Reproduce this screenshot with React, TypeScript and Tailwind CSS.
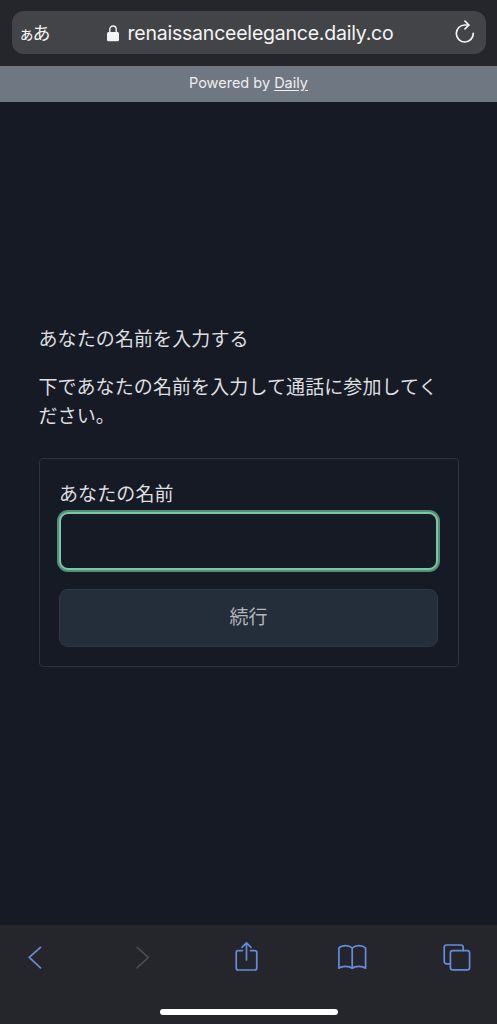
import { useState } from "react";
import type { ReactNode } from "react";

const toolbarItems: { label: string; disabled?: boolean; icon: ReactNode }[] = [
  { label: "戻る", icon: <path d="M21.5 6.3 10.2 16.4 21.5 26.8" /> },
  {
    label: "進む",
    disabled: true,
    icon: <path d="M12.2 6.3 23.3 16.4 12.2 26.8" />,
  },
  {
    label: "共有",
    icon: (
      <>
        <path d="M12.5 9.6H8.2a2 2 0 0 0-2 2V27a2 2 0 0 0 2 2h16.6a2 2 0 0 0 2-2V11.6a2 2 0 0 0-2-2h-4.3" />
        <path d="M16.5 19V2.3M12 6.4l4.5-4.5L21 6.4" />
      </>
    ),
  },
  {
    label: "ブックマーク",
    icon: (
      <path d="M16.2 7C13 3.7 6 3.7 2.9 7V27.2C6 24.8 13 24.8 16.2 27.2C19.4 24.8 26.4 24.8 29.6 27.2V7C26.4 3.7 19.4 3.7 16.2 7ZM16.2 7V27.2" />
    ),
  },
  {
    label: "タブ",
    icon: (
      <>
        <path d="M9.3 22.8H5.6a2.4 2.4 0 0 1-2.4-2.4V6.4A2.4 2.4 0 0 1 5.6 4h14.2a2.4 2.4 0 0 1 2.4 2.4v3" />
        <rect x="9.4" y="9.6" width="19.2" height="19.2" rx="2.4" />
      </>
    ),
  },
];

function AddressBar() {
  return (
    <header className="h-[66px] px-[11.5px] pt-[10.5px] bg-[#25262b]">
      <div className="h-[43.5px] rounded-xl bg-[#434448] text-[#f4f4f5] flex items-center justify-between pl-[7px] pr-[9px]">
        <div className="w-8 flex items-baseline leading-none whitespace-nowrap">
          <span className="text-[16px]">ぁ</span>
          <span className="text-[18px] -ml-[2px]">あ</span>
        </div>
        <div className="flex items-center gap-[9px] pt-0.5 -ml-[5px]">
          <svg width="12" height="17" viewBox="0 0 12 17" fill="none">
            <path
              d="M2.8 8V4.2a3.2 3.2 0 0 1 6.4 0V8"
              stroke="currentColor"
              strokeWidth="1.4"
            />
            <rect y="7" width="12" height="9.3" rx="1.5" fill="currentColor" />
          </svg>
          <span className="font-[Inter,sans-serif] text-[19.5px] tracking-[-0.22px] leading-6 whitespace-nowrap">
            renaissanceelegance.daily.co
          </span>
        </div>
        <svg
          width="22"
          height="24"
          viewBox="0 0 22 24"
          fill="none"
          stroke="currentColor"
          strokeWidth="1.7"
          strokeLinecap="round"
          strokeLinejoin="round"
        >
          <path d="M19.3 13.3a8.5 8.5 0 1 1-8.5-8.3h3.8" />
          <path d="M11 1.2l3.9 3.8-3.9 3.9" />
        </svg>
      </div>
    </header>
  );
}

function JoinForm() {
  const [name, setName] = useState("");

  return (
    <form
      onSubmit={(e) => e.preventDefault()}
      className="mt-[29px] h-[209px] rounded border border-[#2b3240] px-[19.5px] pt-5"
    >
      <label htmlFor="name" className="block h-7 leading-7">
        あなたの名前
      </label>
      <input
        id="name"
        value={name}
        onChange={(e) => setName(e.target.value)}
        className="mt-[5px] block w-full h-[58px] rounded-[9px] border-2 border-[#7cc5a6] bg-[#151a24] px-4 outline-none ring-2 ring-[#528f79]"
      />
      <button
        type="submit"
        className="mt-[19px] block w-full h-[58px] rounded-[9px] border border-[#2e3848] bg-[#242d3a] pb-[3px] text-[#b3b6bc]"
      >
        続行
      </button>
    </form>
  );
}

export default function App() {
  return (
    <div
      lang="ja"
      className="w-full h-screen flex flex-col overflow-hidden bg-[#151a24] font-['Noto_Sans_CJK_JP',sans-serif]"
    >
      <AddressBar />

      <div className="h-9 bg-[#6f7782] text-center font-[Inter,sans-serif] text-[14.5px] leading-[34px] text-[#eeeff1]">
        Powered by <span className="underline underline-offset-2">Daily</span>
      </div>

      <main className="flex-1 px-[38.5px] pt-[222px] text-[19px] tracking-[0.1px] text-[#dedfe1]">
        <h1 className="leading-7">あなたの名前を入力する</h1>
        <p className="mt-5 pr-3 leading-[28.5px]">
          下であなたの名前を入力して通話に参加してください。
        </p>
        <JoinForm />
      </main>

      {/* Browser toolbar */}
      <footer className="h-[99px] flex flex-col items-center justify-between bg-[#25262b] pt-4 pb-[9px]">
        <nav className="w-full flex justify-between pl-[19px] pr-6">
          {toolbarItems.map((item) => (
            <button
              key={item.label}
              aria-label={item.label}
              disabled={item.disabled}
              className={item.disabled ? "text-[#4b4c50]" : "text-[#668bde]"}
            >
              <svg
                width="32"
                height="32"
                viewBox="0 0 32 32"
                fill="none"
                stroke="currentColor"
                strokeWidth="1.7"
                strokeLinecap="round"
                strokeLinejoin="round"
              >
                {item.icon}
              </svg>
            </button>
          ))}
        </nav>
        <div className="w-[178px] h-1.5 rounded-full bg-white" />
      </footer>
    </div>
  );
}
